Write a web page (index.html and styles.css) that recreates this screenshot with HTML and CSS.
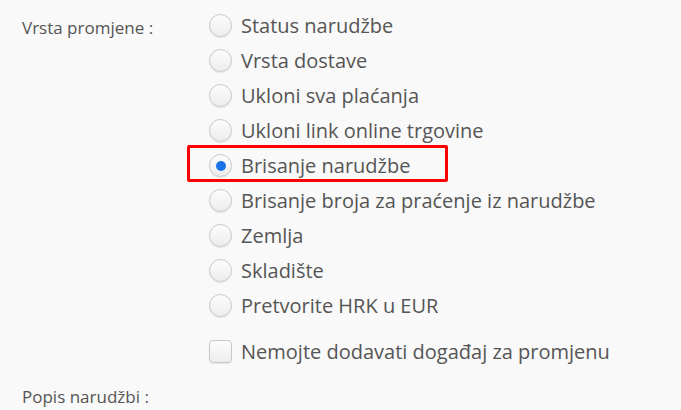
FILE: index.html
```html
<!DOCTYPE html>
<html>
<head>
<meta charset="utf-8">
<link rel="stylesheet" href="styles.css">
</head>
<body>
<div class="form">
  <div class="field">
    <div class="label">Vrsta promjene :</div>
    <div class="options">
      <label class="opt"><span class="radio"></span><span class="text">Status narudžbe</span></label>
      <label class="opt"><span class="radio"></span><span class="text">Vrsta dostave</span></label>
      <label class="opt"><span class="radio"></span><span class="text">Ukloni sva plaćanja</span></label>
      <label class="opt"><span class="radio"></span><span class="text">Ukloni link online trgovine</span></label>
      <label class="opt selected"><span class="radio checked"></span><span class="text">Brisanje narudžbe</span></label>
      <label class="opt"><span class="radio"></span><span class="text">Brisanje broja za praćenje iz narudžbe</span></label>
      <label class="opt"><span class="radio"></span><span class="text">Zemlja</span></label>
      <label class="opt"><span class="radio"></span><span class="text">Skladište</span></label>
      <label class="opt"><span class="radio"></span><span class="text">Pretvorite HRK u EUR</span></label>
      <label class="opt check-row"><span class="checkbox"></span><span class="text">Nemojte dodavati događaj za promjenu</span></label>
    </div>
  </div>
  <div class="field">
    <div class="label label-bottom">Popis narudžbi :</div>
  </div>
</div>
</body>
</html>
```
FILE: styles.css
```css
html, body {
  margin: 0;
  padding: 0;
  background: #f9f9f9;
  font-family: "Open Sans", "Noto Sans", sans-serif;
  color: #555;
}
.form {
  width: 681px;
  height: 410px;
  overflow: hidden;
}
.field {
  display: flex;
}
.label {
  width: 187px;
  padding-left: 22px;
  padding-top: 17px;
  font-size: 17px;
  line-height: 22px;
  color: #555;
  flex-shrink: 0;
}
.label-bottom {
  padding-top: 17px;
}
.options {
  display: flex;
  flex-direction: column;
  padding-top: 8px;
}
.opt {
  display: flex;
  align-items: center;
  height: 35px;
  gap: 9px;
  font-size: 20px;
  color: #555;
  position: relative;
}
.selected::after {
  content: "";
  position: absolute;
  left: -22px;
  top: -3px;
  width: 255px;
  height: 31px;
  border: 3px solid #ff0000;
  border-radius: 2px;
}
.radio, .checkbox {
  width: 21px;
  height: 21px;
  border: 1px solid #c8c8c8;
  background: linear-gradient(#fdfdfd, #ececec);
  box-shadow: 0 1px 1px rgba(0,0,0,0.08);
  flex-shrink: 0;
  display: flex;
  align-items: center;
  justify-content: center;
}
.radio {
  border-radius: 50%;
}
.checkbox {
  border-radius: 4px;
}
.checked::before {
  content: "";
  width: 10px;
  height: 10px;
  border-radius: 50%;
  background: #1a73e8;
}
.check-row {
  margin-top: 11px;
}
```
